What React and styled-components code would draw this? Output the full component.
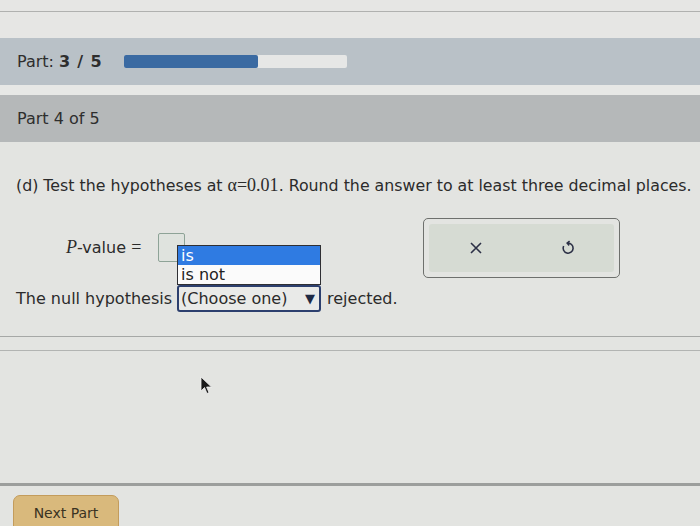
import React from 'react';
import styled, { createGlobalStyle } from 'styled-components';

const GlobalStyle = createGlobalStyle`
  html, body {
    margin: 0;
    padding: 0;
    background: #e3e4e1;
  }
  body {
    font-family: 'DejaVu Sans', Verdana, sans-serif;
    color: #2b2b2b;
  }
`;

const Page = styled.div`
  position: relative;
  width: 700px;
  height: 526px;
  overflow: hidden;
  background: #e3e4e1;
  display: flex;
  flex-direction: column;
`;

const TopStrip = styled.div`
  height: 38px;
  padding-top: 11px;
  box-sizing: border-box;
  background: #e6e6e4;
  flex-shrink: 0;
`;

const HairLine = styled.div`
  height: 1px;
  background: ${(p) => p.color || '#a9aaa8'};
  margin-top: ${(p) => p.gap || 0}px;
  flex-shrink: 0;
`;

const Band = styled.div`
  height: 47px;
  flex-shrink: 0;
  display: flex;
  align-items: center;
  gap: 22px;
  padding-left: 17px;
  background: ${(p) => p.bg};
  font-size: 16px;
  color: #2e2e2e;
`;

const Gap = styled.div`
  height: ${(p) => p.h}px;
  background: ${(p) => p.bg || 'transparent'};
  flex-shrink: 0;
`;

const Strong = styled.b`
  font-weight: 700;
  letter-spacing: 0.8px;
`;

const Track = styled.div`
  width: 223px;
  height: 13px;
  background: #e6e7e6;
  border-radius: 2px;
  display: flex;
`;

const Fill = styled.div`
  height: 100%;
  background: #3a6aa2;
  border-radius: 2px;
`;

const Content = styled.div`
  padding: 33px 0 0 16px;
`;

const Question = styled.div`
  font-size: 15.8px;
  white-space: nowrap;
`;

const Serif = styled.span`
  font-family: 'Liberation Serif', 'Times New Roman', serif;
  font-size: 18px;
`;

const Answer = styled.div`
  display: flex;
  align-items: flex-start;
  margin-top: 21px;
`;

const LeftCol = styled.div`
  display: flex;
  flex-direction: column;
  padding-top: 15px;
  width: 407px;
`;

const PRow = styled.div`
  display: flex;
  align-items: center;
  padding-left: 50px;
  height: 30px;
  font-size: 16px;
`;

const PLabel = styled.span`
  margin-right: 17px;
`;

const Italic = styled.i`
  font-family: 'Liberation Serif', 'Times New Roman', serif;
  font-size: 18px;
`;

const AnswerBox = styled.div`
  width: 25px;
  height: 27px;
  border: 1.5px solid #8ea397;
  border-radius: 2px;
  background: #dfe3de;
`;

const NullRow = styled.div`
  display: flex;
  align-items: center;
  margin-top: 23px;
  font-size: 16px;
  gap: 6px;
`;

const SelectWrap = styled.div`
  position: relative;
`;

const Select = styled.div`
  width: 134px;
  height: 23px;
  border: 2px solid #2c3f6e;
  border-radius: 3px;
  background: #e9eae8;
  display: flex;
  align-items: center;
  justify-content: space-between;
  padding: 0 4px 0 2px;
  box-sizing: content-box;
  margin-left: -1px;
`;

const Arrow = styled.span`
  font-size: 13px;
  color: #1e2a44;
`;

const Menu = styled.div`
  position: absolute;
  left: -1px;
  bottom: 100%;
  width: 142px;
  border: 1px solid #2f2f33;
  background: #fbfbfb;
`;

const Option = styled.div`
  height: 19px;
  line-height: 19px;
  padding-left: 3px;
  font-size: 16px;
  background: ${(p) => (p.active ? '#2f7be2' : '#fbfbfb')};
  color: ${(p) => (p.active ? '#ffffff' : '#222')};
`;

const ToolBox = styled.div`
  width: 197px;
  height: 60px;
  box-sizing: border-box;
  border: 1.5px solid #6e706d;
  border-radius: 5px;
  padding: 5px;
  display: flex;
  margin-top: 1px;
`;

const ToolInner = styled.div`
  flex: 1;
  background: #d6dbd3;
  border-radius: 3px;
  display: flex;
  align-items: center;
  justify-content: space-between;
  padding: 0 34px 0 35px;
`;

const ToolButton = styled.span`
  display: flex;
  width: 24px;
  justify-content: center;
`;

const Rules = styled.div`
  margin-top: 24px;
`;

const Filler = styled.div`
  flex: 1;
`;

const ThickLine = styled.div`
  height: 3px;
  background: #9c9e9c;
  flex-shrink: 0;
`;

const Footer = styled.div`
  box-sizing: border-box;
  padding: 9px 0 0 13px;
  height: 40px;
  flex-shrink: 0;
`;

const NextButton = styled.div`
  width: 106px;
  height: 44px;
  box-sizing: border-box;
  border: 1px solid #c39c5c;
  border-radius: 7px;
  background: #d9b97c;
  font-size: 14px;
  color: #3a3322;
  display: flex;
  justify-content: center;
  padding-top: 9px;
`;

const Cursor = styled.svg`
  position: absolute;
  left: 200px;
  top: 376px;
`;

const App = () => (
  <Page>
    <GlobalStyle />
    <TopStrip>
      <HairLine color="#b0b1af" />
    </TopStrip>
    <Band bg="#b9c1c7">
      <span>
        Part: <Strong>3 / 5</Strong>
      </span>
      <Track>
        <Fill style={{ width: `${(3 / 5) * 100}%` }} />
      </Track>
    </Band>
    <Gap h={10} bg="#e7e8e6" />
    <Band bg="#b5b8b9">Part 4 of 5</Band>
    <Content>
      <Question>
        (d) Test the hypotheses at <Serif>α=0.01</Serif>. Round the answer to at least three decimal places.
      </Question>
      <Answer>
        <LeftCol>
          <PRow>
            <PLabel>
              <Italic>P</Italic>-value <Serif>=</Serif>
            </PLabel>
            <AnswerBox />
          </PRow>
          <NullRow>
            <span>The null hypothesis</span>
            <SelectWrap>
              <Menu>
                <Option active>is</Option>
                <Option>is not</Option>
              </Menu>
              <Select>
                <span>(Choose one)</span>
                <Arrow>▼</Arrow>
              </Select>
            </SelectWrap>
            <span>rejected.</span>
          </NullRow>
        </LeftCol>
        <ToolBox>
          <ToolInner>
            <ToolButton>
              <svg width="14" height="14" viewBox="0 0 14 14">
                <path d="M2 2 L12 12 M12 2 L2 12" stroke="#2c3046" strokeWidth="1.6" fill="none" />
              </svg>
            </ToolButton>
            <ToolButton>
              <svg width="14" height="16" viewBox="0 0 14 16">
                <path d="M6.5 3.2 A5 5 0 1 1 2.6 6" stroke="#2c3046" strokeWidth="1.6" fill="none" />
                <path d="M8.6 1.2 L6.2 3.2 L8.2 5.4" stroke="#2c3046" strokeWidth="1.6" fill="none" />
              </svg>
            </ToolButton>
          </ToolInner>
        </ToolBox>
      </Answer>
      <Rules />
    </Content>
    <HairLine color="#a6a8a6" />
    <HairLine color="#b2b4b2" gap={13} />
    <Filler />
    <ThickLine />
    <Footer>
      <NextButton>Next Part</NextButton>
    </Footer>
    <Cursor width="14" height="20" viewBox="0 0 14 20">
      <path d="M1 1 L1 15 L4.5 11.5 L7 17.5 L9 16.6 L6.6 11 L11.5 11 Z" fill="#1a1a1a" stroke="#f2f2f2" strokeWidth="0.8" />
    </Cursor>
  </Page>
);

export default App;
